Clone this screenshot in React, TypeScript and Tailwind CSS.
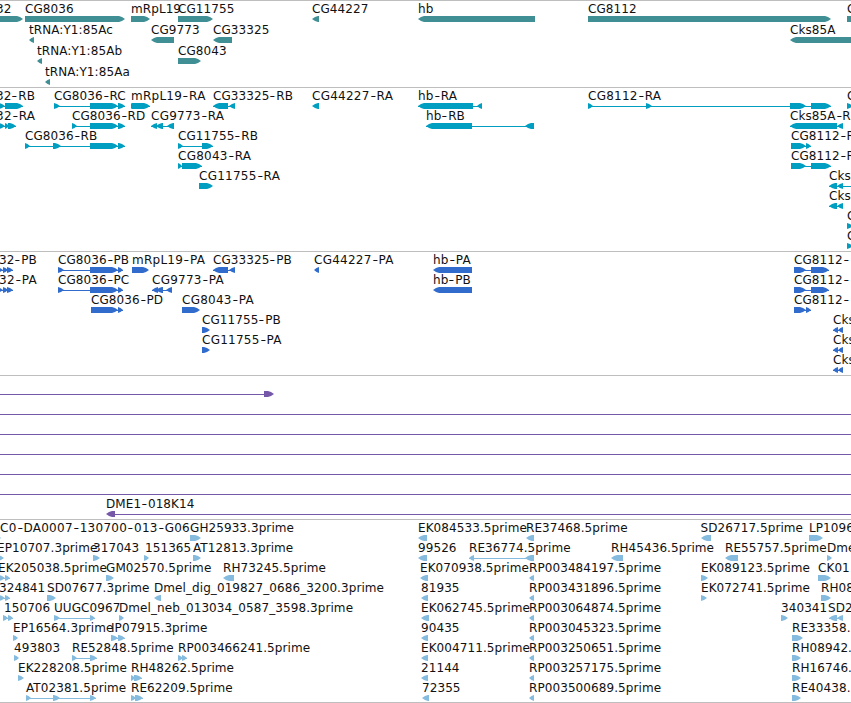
import { Fragment } from "react"

type Feature = {
  x: number
  name?: string
  rev?: boolean
  parts: number[][]
  // spliced line range when it runs past the blocks
  line?: number[]
}

type TrackData = {
  color: string
  rows: Feature[][]
  tall?: boolean
  flush?: boolean
}

const f = (x: number, name: string, ...parts: number[][]): Feature => ({ x, name, parts })
const r = (x: number, name: string, ...parts: number[][]): Feature => ({ x, name, parts, rev: true })
const span = (from: number, to: number): Feature => ({ x: from, parts: [], line: [from, to] })

const genes: Feature[][] = [
  [
    f(-4, "32", [-20, 23]),
    f(25, "CG8036", [25, 125]),
    f(131, "mRpL19", [131, 150]),
    f(178, "CG11755", [178, 213]),
    r(312, "CG44227", [312, 319]),
    r(418, "hb", [418, 535]),
    f(588, "CG8112", [588, 831]),
    f(847, "C", [847, 870]),
  ],
  [
    r(29, "tRNA:Y1:85Ac", [29, 34]),
    r(151, "CG9773", [151, 174]),
    r(213, "CG33325", [213, 232]),
    r(790, "Cks85A", [790, 870]),
  ],
  [r(37, "tRNA:Y1:85Ab", [37, 42]), f(178, "CG8043", [178, 201])],
  [r(45, "tRNA:Y1:85Aa", [45, 50])],
]

const transcripts: Feature[][] = [
  [
    f(-4, "32-RB", [-5, 5], [5, 23]),
    f(54, "CG8036-RC", [54, 60], [90, 118], [118, 125]),
    f(131, "mRpL19-RA", [131, 134], [132, 150]),
    r(213, "CG33325-RB", [213, 228], [229, 235]),
    r(312, "CG44227-RA", [312, 319]),
    r(418, "hb-RA", [418, 473], [477, 482]),
    f(588, "CG8112-RA", [588, 593], [646, 652], [790, 806], [811, 831]),
    f(847, "C", [847, 853]),
  ],
  [
    f(-4, "32-RA", [-5, 5], [5, 9], [8, 16]),
    f(72, "CG8036-RD", [72, 77], [90, 118], [118, 125]),
    r(151, "CG9773-RA", [151, 157], [156, 163], [167, 174]),
    r(426, "hb-RB", [426, 472], [525, 534]),
    r(790, "Cks85A-R", [790, 837], [837, 843]),
  ],
  [
    f(25, "CG8036-RB", [25, 30], [53, 61], [90, 118], [118, 125]),
    f(178, "CG11755-RB", [178, 183], [202, 213]),
    f(791, "CG8112-R", [791, 806], [806, 811]),
  ],
  [f(178, "CG8043-RA", [178, 182], [182, 202]), f(791, "CG8112-R", [791, 806], [811, 831])],
  [f(199, "CG11755-RA", [199, 213]), r(829, "Cks", [829, 837], [837, 843], [855, 860])],
  [r(829, "Cks", [829, 837], [837, 843])],
  [f(847, "C", [847, 853])],
  [f(847, "C", [847, 853])],
]

const proteins: Feature[][] = [
  [
    f(-1, "32-PB", [-5, 3], [3, 8], [7, 13]),
    f(58, "CG8036-PB", [58, 64], [90, 118], [118, 123]),
    f(132, "mRpL19-PA", [132, 149]),
    r(213, "CG33325-PB", [213, 228], [229, 235]),
    r(314, "CG44227-PA", [314, 319]),
    r(433, "hb-PA", [433, 472]),
    f(794, "CG8112-", [794, 806], [811, 829]),
  ],
  [
    f(-1, "32-PA", [-5, 3], [3, 8], [7, 13]),
    f(58, "CG8036-PC", [58, 64], [90, 118], [118, 123]),
    r(152, "CG9773-PA", [152, 158], [156, 163], [166, 172]),
    r(433, "hb-PB", [433, 472]),
    f(794, "CG8112-", [794, 806], [811, 829]),
  ],
  [
    f(91, "CG8036-PD", [91, 118], [118, 123]),
    f(182, "CG8043-PA", [182, 200]),
    f(794, "CG8112-", [794, 806], [806, 811]),
  ],
  [f(202, "CG11755-PB", [202, 210]), r(833, "Cks", [833, 838], [838, 843])],
  [f(202, "CG11755-PA", [202, 210]), r(833, "Cks", [833, 838], [838, 843])],
  [r(833, "Cks", [833, 838], [838, 843])],
]

const clones: Feature[][] = [
  [{ x: 0, parts: [[264, 274]], line: [-5, 270] }],
  [span(-5, 860)],
  [span(-5, 860)],
  [span(-5, 860)],
  [span(-5, 860)],
  [span(-5, 860)],
  [{ x: 106, name: "DME1-018K14", rev: true, parts: [[106, 115]], line: [112, 860] }],
]

const ests: Feature[][] = [
  [
    f(0, "C0-DA0007-130700-013-G06", [-5, 1]),
    f(190, "GH25933.3prime", [190, 201]),
    r(418, "EK084533.5prime", [418, 427]),
    r(526, "RE37468.5prime", [526, 534]),
    r(700.5, "SD26717.5prime", [701, 711]),
    f(809, "LP1096", [809, 823]),
  ],
  [
    f(-3, "EP10707.3prime", [-3, 4]),
    f(93, "317043", [93, 100]),
    f(145, "151365", [144, 149]),
    f(193, "AT12813.3prime", [193, 201]),
    r(418, "99526", [418, 427]),
    r(469, "RE36774.5prime", [469, 474], [525, 534]),
    r(611, "RH45436.5prime", [611, 623]),
    r(725, "RE55757.5prime", [725, 738]),
    f(827, "Dme", [827, 832]),
  ],
  [
    f(-2, "EK205038.5prime", [-4, 5], [5, 10]),
    f(106, "GM02570.5prime", [106, 114]),
    r(223, "RH73245.5prime", [223, 234]),
    r(420, "EK070938.5prime", [420, 428]),
    r(529, "RP003484197.5prime", [529, 534]),
    f(701, "EK089123.5prime", [701, 708]),
    f(818, "CK01", [818, 831]),
  ],
  [
    f(-1, "324841", [-4, 5], [5, 10]),
    f(47, "SD07677.3prime", [47, 56]),
    r(154, "Dmel_dig_019827_0686_3200.3prime", [154, 161]),
    r(421, "81935", [421, 428]),
    r(529, "RP003431896.5prime", [529, 534]),
    f(701, "EK072741.5prime", [701, 707]),
    f(821, "RH08", [821, 831]),
  ],
  [
    f(4, "150706", [3, 8], [8, 13]),
    f(54, "UUGC0967", [54, 60], [90, 95]),
    f(119, "Dmel_neb_013034_0587_3598.3prime", [119, 124]),
    r(421, "EK062745.5prime", [421, 429]),
    r(529, "RP003064874.5prime", [529, 534]),
    f(781, "340341", [781, 788]),
    r(828, "SD2", [829, 837], [837, 843]),
  ],
  [
    f(13, "EP16564.3prime", [13, 18]),
    f(111, "IP07915.3prime", [111, 118], [118, 125]),
    r(421, "90435", [421, 428]),
    r(529, "RP003045323.5prime", [529, 534]),
    f(792, "RE33358.", [792, 803]),
  ],
  [
    f(14, "493803", [14, 19]),
    f(72, "RE52848.5prime", [72, 77], [90, 97]),
    f(178, "RP003466241.5prime", [178, 183], [182, 187]),
    r(421, "EK004711.5prime", [421, 428]),
    r(529, "RP003250651.5prime", [529, 534]),
    f(792, "RH08942.", [792, 801]),
  ],
  [
    f(18, "EK228208.5prime", [18, 24]),
    f(131, "RH48262.5prime", [131, 135], [134, 142]),
    r(421, "21144", [421, 428]),
    r(529, "RP003257175.5prime", [529, 534]),
    f(792, "RH16746.", [792, 801]),
  ],
  [
    f(26, "AT02381.5prime", [26, 31], [53, 60], [90, 96]),
    f(131, "RE62209.5prime", [131, 136], [135, 143]),
    r(422, "72355", [422, 429]),
    r(529, "RP003500689.5prime", [529, 534]),
    f(792, "RE40438.", [792, 801]),
  ],
]

const tracks: TrackData[] = [
  { color: "#3f8f94", rows: genes, tall: true, flush: true },
  { color: "#009fc1", rows: transcripts },
  { color: "#316ccc", rows: proteins },
  { color: "#7658a8", rows: clones },
  { color: "#85bbde", rows: ests, flush: true },
]

// block with a slightly rounded head, six pixels long where there is room
function arrow([from, to]: number[], rev?: boolean) {
  const head = Math.min(6, to - from)
  if (rev) {
    return `${from},3 ${from + head / 2},1 ${from + head},0 ${to},0 ${to},6 ${from + head},6 ${from + head / 2},5`
  }
  return `${from},0 ${to - head},0 ${to - head / 2},1 ${to},3 ${to - head / 2},5 ${to - head},6 ${from},6`
}

function Glyph({ feature, color }: { feature: Feature; color: string }) {
  const { parts, rev, line } = feature
  const [from, to] = line ?? [parts[0][0], parts[parts.length - 1][1]]

  return (
    <g fill={color}>
      {(line || parts.length > 1) && <rect x={from} y={3} width={to - from} height={1} />}
      {parts.map((part, i) => (
        <polygon key={i} points={arrow(part, rev)} />
      ))}
    </g>
  )
}

function Label({ x, name = "" }: { x: number; name?: string }) {
  // names ending in a capital A and long dashed ones run a little wider
  const wide = /-.A$/.test(name) || name.split("-").length > 3
  const spacing = wide ? "tracking-[0.25px]" : "tracking-[0.08px]"

  return (
    <span className={`absolute top-0 leading-[12px] whitespace-nowrap ${spacing}`} style={{ left: x }}>
      {name.split("-").map((piece, i) => (
        <Fragment key={i}>
          {i > 0 && <span className="inline-block scale-x-130 px-[1.2px]">-</span>}
          {piece}
        </Fragment>
      ))}
    </span>
  )
}

function Track({ color, rows, tall, flush }: TrackData) {
  return (
    <section className={`border-t border-[#bebebe] pt-0.5 ${flush ? "" : "pb-px"}`}>
      {rows.map((row, i) => (
        <div key={i} className={`relative overflow-x-clip ${tall ? "h-[21px]" : "h-5"}`}>
          <div className="h-[13px]">
            {row.map((feature, j) => (
              <Label key={j} x={feature.x} name={feature.name} />
            ))}
          </div>
          <svg className="block" width="851" height="6">
            {row.map((feature, j) => (
              <Glyph key={j} feature={feature} color={color} />
            ))}
          </svg>
        </div>
      ))}
    </section>
  )
}

export default function App() {
  return (
    <main className="w-[851px] h-[703px] overflow-hidden bg-white font-['DejaVu_Sans',sans-serif] text-[12px] text-[#111]">
      {tracks.map((track, i) => (
        <Track key={i} {...track} />
      ))}
      <div className="border-t border-[#bebebe]" />
    </main>
  )
}
